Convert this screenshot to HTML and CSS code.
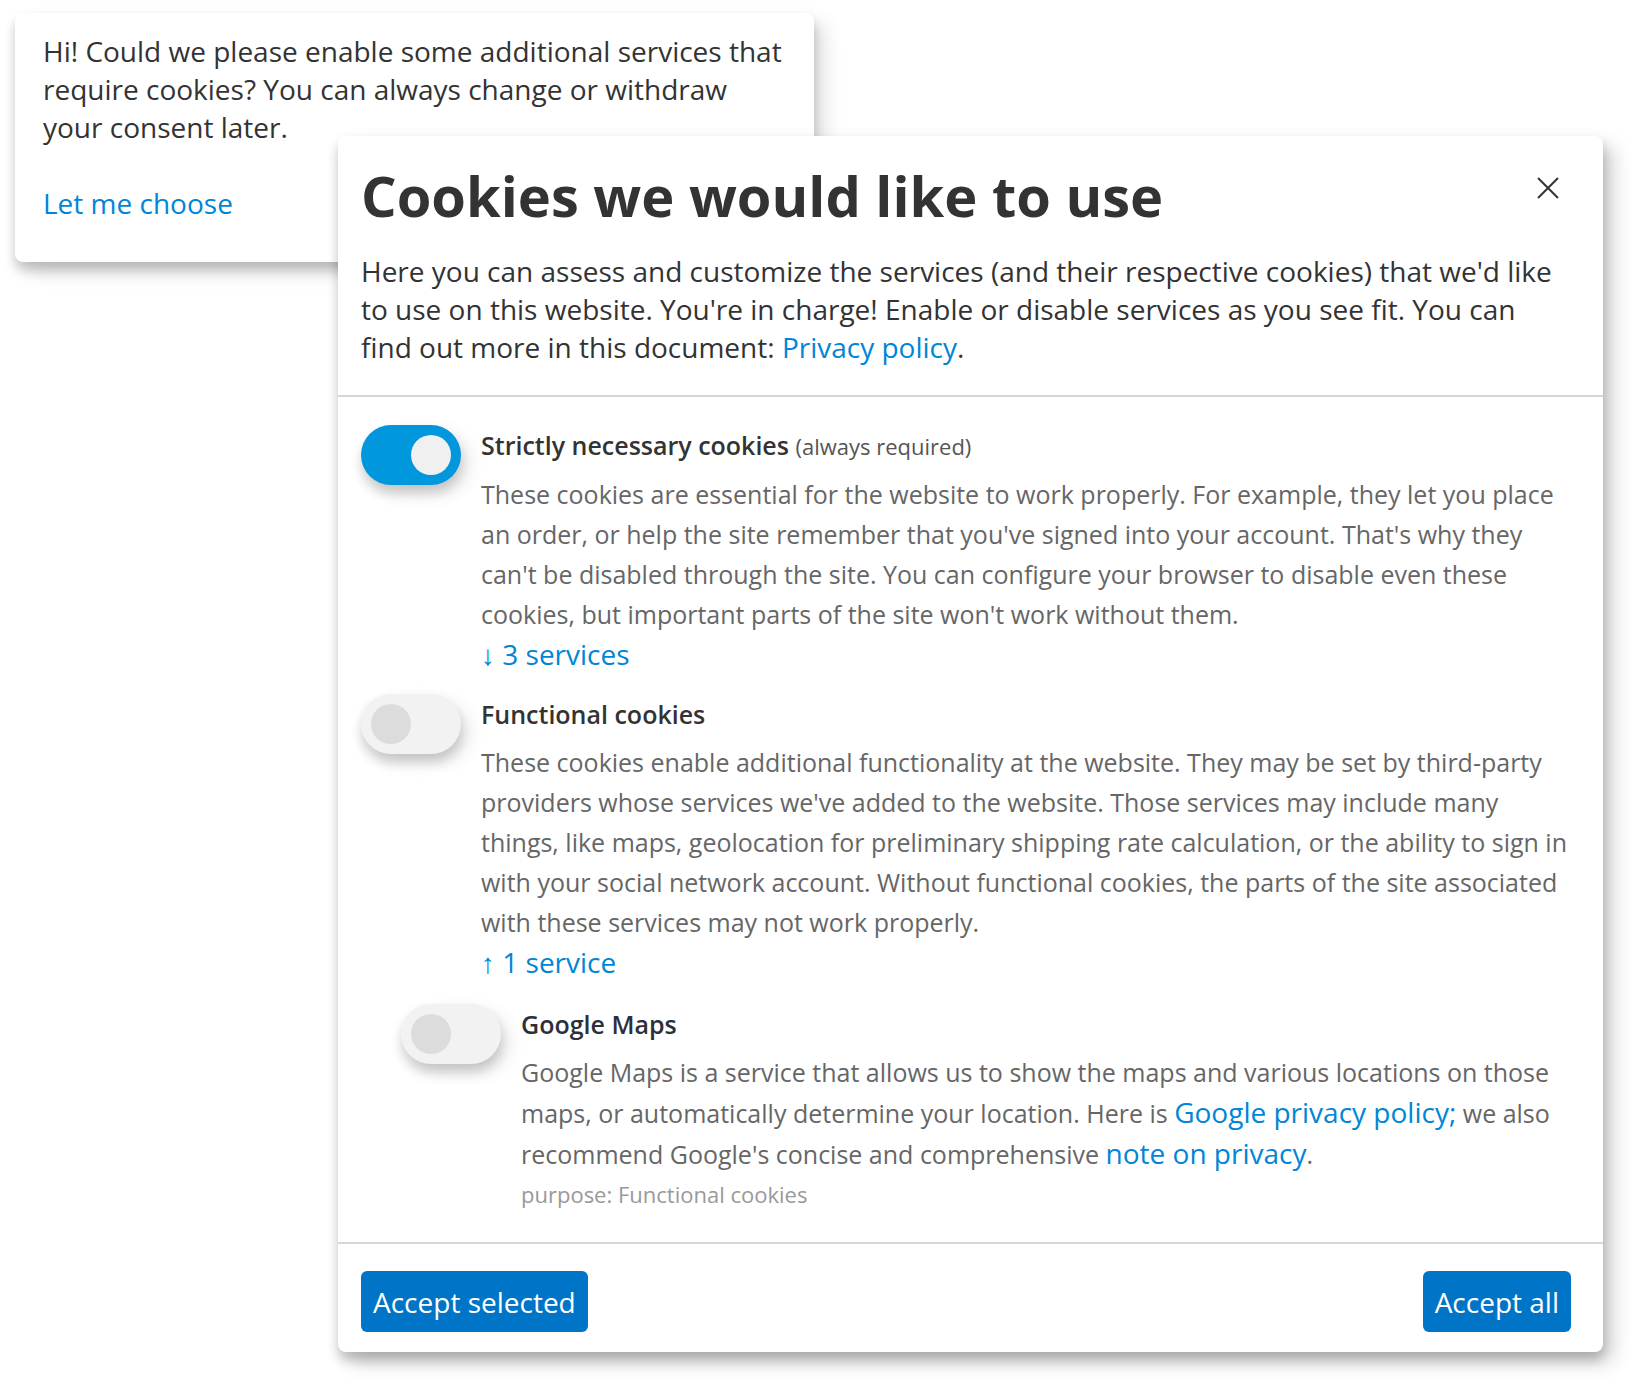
FILE: index.html
```html
<!DOCTYPE html>
<html lang="en">
<head>
<meta charset="utf-8">
<title>Cookie consent</title>
<link rel="stylesheet" href="styles.css">
</head>
<body>
<div class="page">
  <div class="notice">
    <p class="notice-text">Hi! Could we please enable some additional services that require cookies? You can always change or withdraw your consent later.</p>
    <a class="link" href="#">Let me choose</a>
  </div>

  <div class="modal">
    <div class="modal-header">
      <h1 class="modal-title">Cookies we would like to use</h1>
      <button class="close" aria-label="Close">
        <svg viewBox="0 0 22 22" width="22" height="22"><path d="M1 1 L21 21 M21 1 L1 21" stroke="#333" stroke-width="2" fill="none"/></svg>
      </button>
      <p class="modal-intro">Here you can assess and customize the services (and their respective cookies) that we'd like to use on this website. You're in charge! Enable or disable services as you see fit. You can find out more in this document: <a class="link" href="#">Privacy policy</a>.</p>
    </div>

    <div class="modal-body">
      <div class="purpose">
        <span class="switch on"><span class="knob"></span></span>
        <div class="purpose-text">
          <div class="purpose-title">Strictly necessary cookies <span class="required">(always required)</span></div>
          <p class="purpose-desc">These cookies are essential for the website to work properly. For example, they let you place an order, or help the site remember that you've signed into your account. That's why they can't be disabled through the site. You can configure your browser to disable even these cookies, but important parts of the site won't work without them.</p>
          <a class="link services-toggle" href="#">↓ 3 services</a>
        </div>
      </div>

      <div class="purpose">
        <span class="switch"><span class="knob"></span></span>
        <div class="purpose-text">
          <div class="purpose-title">Functional cookies</div>
          <p class="purpose-desc">These cookies enable additional functionality at the website. They may be set by third-party providers whose services we've added to the website. Those services may include many things, like maps, geolocation for preliminary shipping rate calculation, or the ability to sign in with your social network account. Without functional cookies, the parts of the site associated with these services may not work properly.</p>
          <a class="link services-toggle" href="#">↑ 1 service</a>
        </div>
      </div>

      <div class="purpose service">
        <span class="switch"><span class="knob"></span></span>
        <div class="purpose-text">
          <div class="purpose-title service-title">Google Maps</div>
          <p class="purpose-desc">Google Maps is a service that allows us to show the maps and various locations on those maps, or automatically determine your location. Here is <a class="link" href="#">Google privacy policy;</a> we also recommend Google's concise and comprehensive <a class="link" href="#">note on privacy</a>.</p>
          <p class="purpose-meta">purpose: Functional cookies</p>
        </div>
      </div>
    </div>

    <div class="modal-footer">
      <button class="btn">Accept selected</button>
      <button class="btn">Accept all</button>
    </div>
  </div>
</div>
</body>
</html>
```

FILE: styles.css
```css
html, body {
  margin: 0;
  padding: 0;
  background: #ffffff;
}

body {
  font-family: "Open Sans", "Noto Sans", sans-serif;
  color: #333333;
}

.page {
  position: relative;
  width: 1646px;
  height: 1396px;
  overflow: hidden;
}

.link {
  color: #0086d6;
  text-decoration: none;
  font-size: 28px;
}

/* ---------- notice card ---------- */
.notice {
  margin: 13px 0 0 15px;
  width: 799px;
  height: 249px;
  box-sizing: border-box;
  padding: 19px 28px;
  background: #fff;
  border-radius: 8px;
  box-shadow: 0 8px 12px 0 rgba(0, 0, 0, 0.2), 10px 10px 20px 0 rgba(0, 0, 0, 0.12);
  font-size: 28px;
  line-height: 38px;
}

.notice-text {
  margin: 0 0 38px;
}

/* ---------- modal ---------- */
.modal {
  position: absolute;
  left: 338px;
  top: 136px;
  width: 1265px;
  background: #fff;
  border-radius: 8px;
  box-shadow: 0 8px 12px 0 rgba(0, 0, 0, 0.2), 10px 10px 20px 0 rgba(0, 0, 0, 0.19);
}

.modal-header {
  position: relative;
  padding: 24px 44px 29px 23px;
  border-bottom: 2px solid #d6d6d6;
}

.modal-title {
  margin: 0;
  font-size: 56px;
  line-height: 70px;
  font-weight: 700;
  color: #333;
}

.close {
  position: absolute;
  top: 41px;
  right: 44px;
  width: 22px;
  height: 22px;
  padding: 0;
  border: 0;
  background: none;
  display: flex;
}

.modal-intro {
  margin: 22px 0 0;
  font-size: 28px;
  line-height: 38px;
}

.modal-body {
  padding: 28px 26px 28px 23px;
  display: flex;
  flex-direction: column;
  gap: 20px;
  border-bottom: 2px solid #d6d6d6;
}

.purpose {
  display: flex;
  gap: 20px;
  align-items: flex-start;
}

.purpose.service {
  margin-left: 40px;
  margin-top: 2px;
}

.switch {
  flex: none;
  width: 100px;
  height: 60px;
  box-sizing: border-box;
  padding: 10px;
  border-radius: 30px;
  background: #f2f2f2;
  display: flex;
  justify-content: flex-start;
  box-shadow: 0 8px 12px 0 rgba(0, 0, 0, 0.16), 8px 8px 18px 0 rgba(0, 0, 0, 0.1);
}

.switch .knob {
  width: 40px;
  height: 40px;
  border-radius: 50%;
  background: #dcdcdc;
}

.switch.on {
  background: #0097dc;
  justify-content: flex-end;
}

.switch.on .knob {
  background: #f0f0f0;
}

.purpose-text {
  flex: 1;
  min-width: 0;
}

.purpose-title {
  font-size: 25px;
  line-height: 40px;
  font-weight: 600;
  color: #333;
}

.service-title {
  color: #2b303b;
}

.required {
  font-size: 22px;
  font-weight: 400;
  color: #555;
}

.purpose-desc {
  margin: 8px 0 0;
  font-size: 25px;
  line-height: 40px;
  color: #666;
}

.services-toggle {
  display: block;
  line-height: 40px;
}

.purpose-meta {
  margin: 0;
  font-size: 22px;
  line-height: 40px;
  color: #999;
}

/* ---------- footer ---------- */
.modal-footer {
  display: flex;
  justify-content: space-between;
  padding: 27px 32px 20px 23px;
}

.btn {
  height: 61px;
  padding: 0 12px;
  border: 0;
  border-radius: 6px;
  background: #0074c6;
  color: #fff;
  font-family: "Open Sans", "Noto Sans", sans-serif;
  font-size: 28px;
}
```
